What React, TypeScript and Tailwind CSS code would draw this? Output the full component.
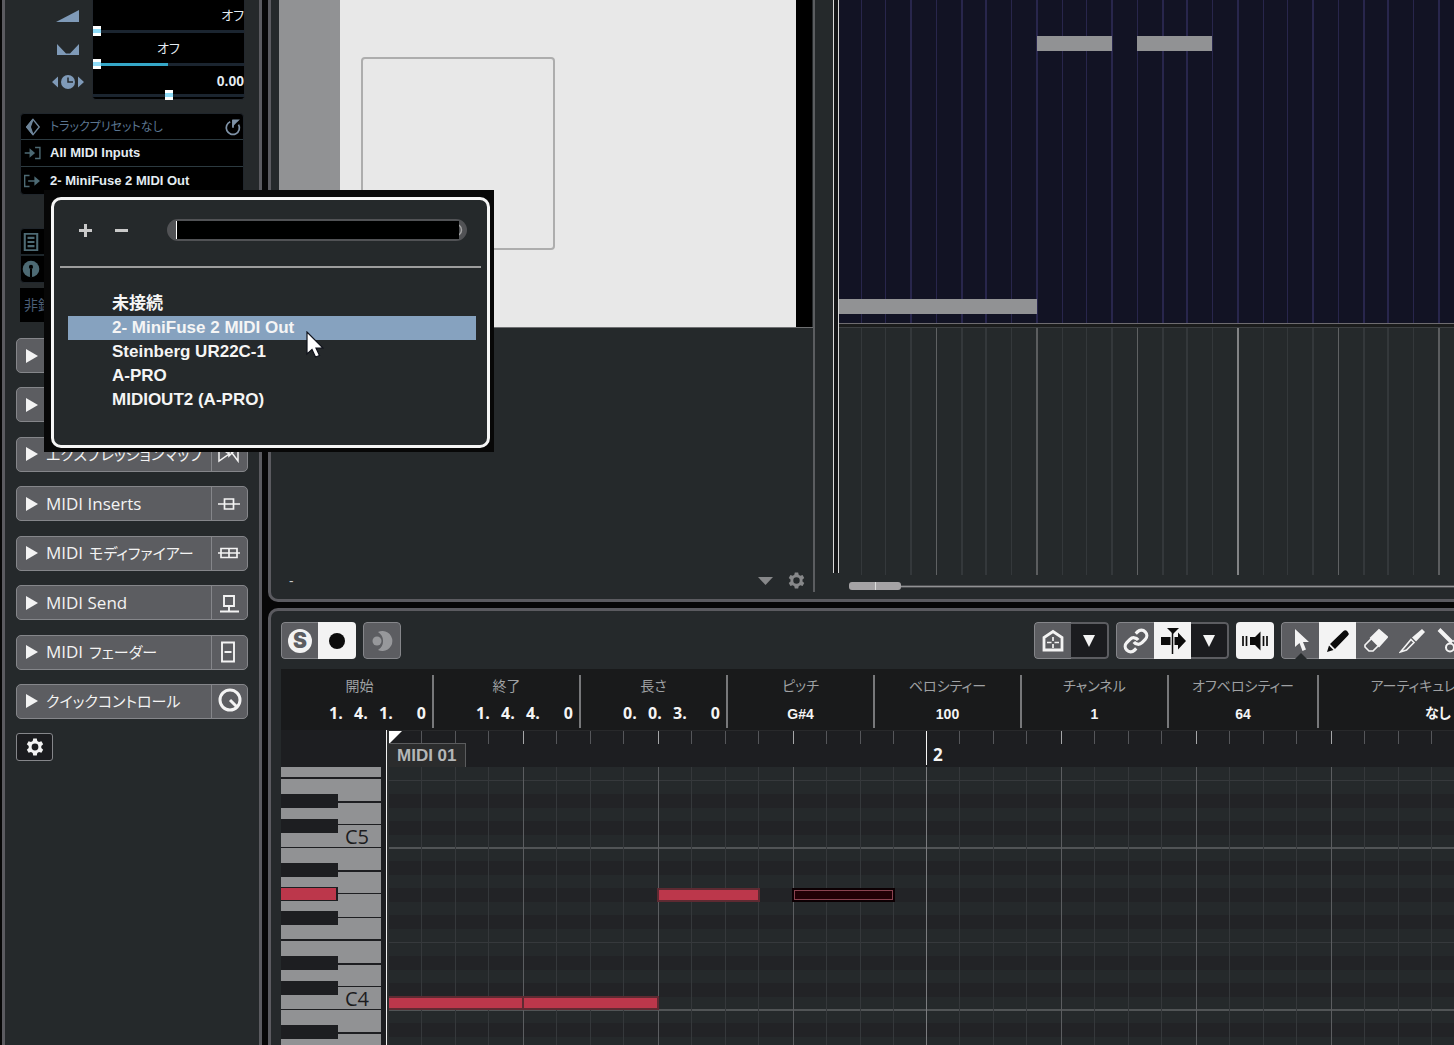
import type { CSSProperties, ReactNode } from "react";

const SUBS = [25, 49, 74, 100, 125, 149, 175, 200];
const WIDE = [74, 125, 149, 200];

const arrangeLines = Array.from({ length: 12 }, (_, bar) =>
  SUBS.map((s, i) => ({
    x: bar * 201 + s - 3,
    wide: WIDE.includes(s),
    level: i === 7 ? (bar % 2 === 1 ? 3 : 2) : i === 3 ? 1 : 0,
  }))
).flat();

const levelColor = ["bg-[#34383b]", "bg-[#5f6163]", "bg-[#5b5d5f]", "bg-[#828385]"];

// sixteenth positions inside the key editor, four bars are plenty
const ticks = Array.from({ length: 64 }, (_, i) => ({
  x: Math.floor(i / 16) * 538 + (Math.floor(i / 4) % 4) * 135 + [0, 33, 67, 100][i % 4] - 1,
  beat: i % 4 === 0,
  bar: i % 16 === 0,
})).slice(1);

// B down to C
const rows = [
  { h: "h-[13px]", black: false },
  { h: "h-[14px]", black: true },
  { h: "h-[13px]", black: false },
  { h: "h-[14px]", black: true },
  { h: "h-[13px]", black: false },
  { h: "h-[14px]", black: true },
  { h: "h-[13px]", black: false },
  { h: "h-[14px]", black: false },
  { h: "h-[14px]", black: true },
  { h: "h-[13px]", black: false },
  { h: "h-[14px]", black: true },
  { h: "h-[13px]", black: false },
];

const whiteKeys = [
  "h-6 border-b-2",
  "h-[22px] border-b",
  "h-6 border-b",
  "h-[23px] border-b-2",
  "h-6 border-b-2",
  "h-[22px] border-b",
  "h-[23px] border-b",
];

const blackKeys = [15, 39, 63, 108, 133];

function Octave({ name, active }: { name?: string; active?: boolean }) {
  return (
    <div className="relative shrink-0">
      {whiteKeys.map((k, i) => (
        <div
          key={i}
          className={`${k} flex items-center justify-end border-[#1d1e21] bg-[#919294] pt-px pr-3 text-xl text-[#1c1c1e]`}
        >
          {i === 6 && name}
        </div>
      ))}
      {blackKeys.map((top) => (
        <div
          key={top}
          style={{ top }}
          className={`absolute left-0 h-[14px] w-[57px] ${
            active && top === 39 ? "border-y border-r-2 border-[#1d1e21] bg-[#bc374b]" : "bg-[#1d1e21]"
          }`}
        />
      ))}
    </div>
  );
}

function OctaveRows() {
  return (
    <div className="relative shrink-0">
      {rows.map((r, i) => (
        <div
          key={i}
          className={`${r.h} ${r.black ? "bg-[#222326]" : "bg-[#25292b]"} ${
            i === 7 ? "border-t border-[#36393c]" : ""
          }`}
        />
      ))}
      <div className="absolute inset-x-0 -top-px h-[2px] bg-[#515456]" />
    </div>
  );
}

function Note({ style, selected }: { style: CSSProperties; selected?: boolean }) {
  return (
    <div
      style={style}
      className={`absolute h-[14px] border-2 ${selected ? "border-[#0c0003] bg-[#8a4350] p-px" : "border-[#5e2a32] bg-[#bc374b]"}`}
    >
      {selected && <div className="h-full bg-[#210005]" />}
    </div>
  );
}

function Icon({ children, size = 26, className = "" }: { children: ReactNode; size?: number; className?: string }) {
  return (
    <svg
      width={size}
      height={size}
      viewBox="0 0 26 26"
      fill="none"
      stroke="currentColor"
      strokeWidth="2"
      aria-hidden="true"
      className={`shrink-0 ${className}`}
    >
      {children}
    </svg>
  );
}

const gearPath =
  "M10.7 2h4.6l.7 3.2 2.2 1.3 3.1-1 2.3 4-2.4 2.2v2.6l2.4 2.2-2.3 4-3.1-1-2.2 1.3-.7 3.2h-4.6l-.7-3.2-2.2-1.3-3.1 1-2.3-4 2.4-2.2v-2.6L2.4 9.5l2.3-4 3.1 1 2.2-1.3zM13 8.6a4.4 4.4 0 1 0 0 8.800 4.400 4.400 0 0 0 0-8.800z";

function Gear({ size, className }: { size: number; className?: string }) {
  return (
    <Icon size={size} className={className}>
      <path d={gearPath} fill="currentColor" stroke="none" fillRule="evenodd" />
    </Icon>
  );
}

const rangeBase =
  "block h-[10px] w-full appearance-none bg-no-repeat [&::-webkit-slider-thumb]:h-[10px] [&::-webkit-slider-thumb]:w-2 [&::-webkit-slider-thumb]:appearance-none [&::-webkit-slider-thumb]:bg-[linear-gradient(#fff_3px,#8fdcf8_3px,#8fdcf8_7px,#fff_7px)]";
const rangeTrack = "bg-[linear-gradient(#1b2530,#1b2530)] bg-[length:100%_3px] bg-center";
const rangeHalf =
  "bg-[linear-gradient(90deg,#35a7c8_50%,#1b2530_50%)] bg-[length:100%_3px] bg-center";

const sections: { name: string; kana?: string; hidden?: boolean; icon: ReactNode }[] = [
  { name: "コード", hidden: true, icon: <path d="M3 13h20" /> },
  { name: "MIDI トラック", hidden: true, icon: <path d="M3 13h20" /> },
  {
    name: "",
    kana: "エクスプレッションマップ",
    icon: <path d="M3 6l10 7-10 7zM22 6v14l-9-12v7z" strokeWidth="1.500" />,
  },
  { name: "MIDI Inserts", icon: <path d="M2 13h6M18 13h6M8.500 8h9v10h-9zM8 13h10" strokeWidth="1.700" /> },
  {
    name: "MIDI",
    kana: "モディファイアー",
    icon: <path d="M2 13h22M5 8.500h16v9H5zM13 8.500v9" strokeWidth="1.700" />,
  },
  { name: "MIDI Send", icon: <path d="M8 6h10v10H8zM13 16v5M4 21.500h19" strokeWidth="1.900" /> },
  { name: "MIDI", kana: "フェーダー", icon: <path d="M6 3.500h12v19H6zM8.500 13h7" strokeWidth="1.900" /> },
  {
    name: "",
    kana: "クイックコントロール",
    icon: (
      <>
        <circle cx="14" cy="12" r="10" strokeWidth="3" />
        <path d="M14 12l7 7" strokeWidth="3" />
      </>
    ),
  },
];

function Sidebar() {
  return (
    <aside className="flex w-[260px] shrink-0 flex-col border-x-[3px] border-[#5b5b60] bg-[#25292b] px-[11px]">
      <div className="flex h-[100px] shrink-0 justify-end pr-[3px]">
        <div className="flex w-10 flex-col items-center pr-2 text-[#7f9ab8]">
          <svg width="24" height="12" viewBox="0 0 24 12" className="mt-[10px]" aria-hidden="true">
            <path d="M0 12L23 0v12z" fill="currentColor" />
          </svg>
          <svg width="22" height="11" viewBox="0 0 22 11" className="mt-[22px]" aria-hidden="true">
            <path d="M0 0l9 9.500h4L22 0v11H0z" fill="currentColor" />
          </svg>
          <svg width="32" height="14" viewBox="0 0 32 14" className="mt-5 shrink-0" aria-hidden="true">
            <path d="M6 1.500v11L0 7zM26 1.500v11L32 7z" fill="currentColor" />
            <circle cx="16" cy="7" r="7" fill="currentColor" />
            <path d="M16 2.500V7h5" fill="none" stroke="#25292b" strokeWidth="1.500" />
          </svg>
        </div>
        <div className="w-[153px] rounded-b border border-t-0 border-[#22272d] bg-black leading-none text-[#e4ecf2]">
          <label className="block h-[26px] pt-[9px] text-right text-[13px]" htmlFor="volume">
            オフ
          </label>
          <input id="volume" type="range" min="0" max="100" defaultValue="0" className={`${rangeBase} ${rangeTrack}`} />
          <label className="block h-[23px] pt-[6px] text-center text-[13px]" htmlFor="pan">
            オフ
          </label>
          <input id="pan" type="range" min="0" max="100" defaultValue="0" className={`${rangeBase} ${rangeHalf}`} />
          <label
            className="block h-[21px] pt-[5px] text-right font-[Liberation_Sans] text-sm leading-none font-bold"
            htmlFor="delay"
          >
            0.00
          </label>
          <input id="delay" type="range" min="0" max="100" defaultValue="50" className={`${rangeBase} ${rangeTrack}`} />
        </div>
      </div>

      <div className="mx-1 mt-[13px] shrink-0 divide-y divide-[#2c3a40] rounded border border-[#20262c] bg-black text-[13px]">
        <button className="flex h-[26px] w-full items-center gap-2 pr-px pl-[3px] text-left text-[#5b7590]">
          <Icon size={18} className="text-[#6d8499]">
            <path d="M13 2l9 11-9 11L4 13z" />
            <path d="M13 2L4 13l9 11-4-11z" fill="currentColor" />
          </Icon>
          <span className="flex-1 text-xs whitespace-nowrap">トラックプリセットなし</span>
          <Icon size={18} className="text-[#7f93a8]">
            <path d="M9 5.500a9.500 9.500 0 1 0 12 4" strokeWidth="2.500" />
            <path d="M12 13V2h11l-5 5z" fill="currentColor" stroke="none" />
            <path d="M13 14V3" strokeWidth="2.500" />
          </Icon>
        </button>
        <button className="flex h-[27px] w-full items-center gap-2 pl-[3px] text-left font-[Liberation_Sans] font-bold text-[#e4ecf2]">
          <Icon size={18} className="text-[#4d6a74]">
            <path d="M1 13h8M16 5h7v16h-7" />
            <path d="M8 6l8 7-8 7z" fill="currentColor" stroke="none" />
          </Icon>
          All MIDI Inputs
        </button>
        <button className="flex h-[27px] w-full items-center gap-2 pl-[3px] text-left font-[Liberation_Sans] font-bold text-[#e4ecf2]">
          <Icon size={18} className="text-[#4d6a74]">
            <path d="M8 5H1v16h7M6 13h11" />
            <path d="M15 6l8 7-8 7z" fill="currentColor" stroke="none" />
          </Icon>
          2- MiniFuse 2 MIDI Out
        </button>
      </div>

      <div className="mx-1 mt-[33px] shrink-0 divide-y-2 divide-[#1d262b] rounded border border-[#20262c] bg-black text-[#4d6a74]">
        <div className="flex h-[27px] items-center pl-px">
          <Icon size={18}>
            <path d="M4 1h18v24H4zM8 7h10M8 13h10M8 19h10" strokeWidth="3" />
          </Icon>
        </div>
        <div className="flex h-[26px] items-center pl-px">
          <Icon size={18}>
            <circle cx="13" cy="13" r="12" fill="currentColor" stroke="none" />
            <path d="M13 13v12" stroke="#000" strokeWidth="3" />
            <circle cx="13" cy="10" r="3" fill="#000" stroke="none" />
          </Icon>
        </div>
      </div>

      <div className="mx-1 mt-[5px] flex h-[34px] shrink-0 items-center bg-black pl-1 text-sm text-[#4b5f78]">
        非録音
      </div>

      <div className="mt-4 flex h-[381px] shrink-0 flex-col justify-between">
        {sections.map((s, i) => (
          <button
            key={i}
            aria-label={`${s.name} ${s.kana ?? ""}`.trim()}
            className="flex h-[35px] items-stretch overflow-hidden rounded-[5px] border border-[#85868a] bg-[#5c5d61] text-left text-[17px] whitespace-nowrap text-[#f3f3f3]"
          >
            <span className="flex min-w-0 flex-1 items-center pl-[9px]">
              <svg width="12" height="14" viewBox="0 0 12 14" className="mr-2 shrink-0" aria-hidden="true">
                <path d="M0 0l12 7-12 7z" fill="currentColor" />
              </svg>
              {!s.hidden && s.name}
              {s.kana && <span className={s.name ? "ml-[6px] text-[15px]" : "text-[15px]"}>{s.kana}</span>}
            </span>
            <span className="flex w-9 shrink-0 items-center border-l border-[#85868a] pl-1">
              <Icon size={26}>{s.icon}</Icon>
            </span>
          </button>
        ))}
      </div>

      <button
        aria-label="設定"
        className="mt-[14px] flex h-[28px] w-[37px] shrink-0 items-center justify-center rounded-[3px] border border-[#85868a] bg-[#1b1c1f] text-[#f3f3f3]"
      >
        <Gear size={20} />
      </button>
    </aside>
  );
}

function ArrangeView() {
  return (
    <section className="flex h-[602px] shrink-0 overflow-hidden rounded-bl-[10px] border-b-[3px] border-l-[3px] border-[#5b5b60] bg-[#25292b]">
      <div className="flex w-[542px] shrink-0 flex-col pl-2">
        <div className="flex h-[328px] border-b border-[#6e6f71]">
          <div className="w-[61px] bg-[#919294]" />
          <div className="flex-1 bg-[#e8e8e8] pt-[57px] pl-[21px]">
            <div className="h-[193px] w-[194px] rounded-[4px] border-2 border-[#adadad]" />
          </div>
          <div className="w-[17px] border-r border-[#25292b] bg-black" />
        </div>
        <div className="mt-auto flex h-[37px] items-center pr-[7px] pl-[10px] text-sm text-[#c8c9ca]">
          <span className="flex-1">-</span>
          <svg width="15" height="8" viewBox="0 0 15 8" className="mr-[14px] text-[#87888a]" aria-hidden="true">
            <path d="M0 0h15L7.500 8z" fill="currentColor" />
          </svg>
          <Gear size={19} className="text-[#87888a]" />
        </div>
      </div>
      <div className="h-[592px] w-[2px] shrink-0 bg-[#5b5d60]" />
      <div className="ml-[18px] h-[573px] w-[6px] shrink-0 border-x border-[#d8d8d8] bg-[#151618]" />
      <div className="flex min-w-0 flex-1 flex-col">
        <div className="relative h-[324px] overflow-hidden border-b border-[#6e6c70] bg-[#121324]">
          {arrangeLines.map((l) => (
            <div
              key={l.x}
              style={{ left: l.x }}
              className={`absolute inset-y-0 bg-[#28264c] ${l.wide ? "w-[2px]" : "w-px"}`}
            />
          ))}
          <div className="absolute top-[299px] left-0 h-[15px] w-[198px] bg-[#919294]" />
          <div className="absolute top-[36px] left-[198px] h-[15px] w-[75px] bg-[#919294]" />
          <div className="absolute top-[36px] left-[298px] h-[15px] w-[75px] bg-[#919294]" />
        </div>
        <div className="h-1 border-b border-[#3d4042] bg-[#1b1c1c]" />
        <div className="relative h-[247px] overflow-hidden">
          {arrangeLines.map((l) => (
            <div
              key={l.x}
              style={{ left: l.x }}
              className={`absolute inset-y-0 ${levelColor[l.level]} ${l.wide ? "w-[2px]" : "w-px"}`}
            />
          ))}
        </div>
        <div className="mt-[7px] ml-[10px] flex h-2 items-center">
          <div className="flex h-2 w-[52px] justify-center rounded-[3px] bg-[#a5a3a5]">
            <div className="w-px bg-[#dcdcdc]" />
          </div>
          <div className="h-[3px] flex-1 border-y border-[#4c4d50] bg-[#919294]" />
        </div>
      </div>
    </section>
  );
}

const segment = "flex shrink-0 items-center justify-center";
const group = "flex h-[37px] shrink-0 overflow-hidden rounded-[4px] text-[#f3f3f3]";

function Down() {
  return (
    <svg width="12" height="12" viewBox="0 0 12 12" aria-hidden="true">
      <path d="M0 0h12L6 12z" fill="currentColor" />
    </svg>
  );
}

const grey = "border border-[#85868a] bg-[#5c5d61]";
const dark = "border-y-2 border-r-2 border-[#5c5d61] bg-[#1b1c1f]";
const lit = "bg-[#f3f3f3] text-[#0c0c0c]";
const greyMid = "border-y border-[#85868a] bg-[#5c5d61]";

function Toolbar() {
  return (
    <div className="flex h-[58px] shrink-0 items-start overflow-hidden pt-[11px] pl-[10px]">
      <div className={group}>
        <button aria-label="ソロ" className={`${segment} ${grey} w-[37px] rounded-l-[4px] border-r-0`}>
          <span className="flex size-6 items-center justify-center rounded-full bg-[#f3f3f3] font-[Inter] text-[21px] leading-none font-black text-[#5c5d61]">
            S
          </span>
        </button>
        <button aria-label="録音" className={`${segment} ${lit} w-[38px]`}>
          <span className="size-4 rounded-full bg-[#0c0c0c]" />
        </button>
      </div>
      <div className={`${group} ml-[7px]`}>
        <button aria-label="音響フィードバック" className={`${segment} ${grey} w-[38px] rounded-[4px]`}>
          <Icon className="text-[#97989b]">
            <circle cx="8" cy="13" r="4.500" fill="currentColor" stroke="none" />
            <path d="M9 4a10 10 0 1 1 0 18a10.500 10.500 0 0 0 0-18z" fill="currentColor" stroke="none" />
          </Icon>
        </button>
      </div>

      <div className="ml-auto flex w-[420px] shrink-0 gap-[7px] overflow-hidden">
        <div className={group}>
          <button aria-label="ホーム" className={`${segment} ${grey} w-[37px] rounded-l-[4px] border-r-0`}>
            <Icon>
              <path d="M4 22V9.500L13 3.500l9 6V22z" strokeWidth="2.800" />
              <path d="M13 9v4M13 16v4M7 14.500h4.500M14.500 14.500h4.500" strokeWidth="1.700" />
            </Icon>
          </button>
          <button aria-label="メニュー" className={`${segment} ${dark} w-[38px] rounded-r-[4px]`}>
            <Down />
          </button>
        </div>
        <div className={group}>
          <button aria-label="リンク" className={`${segment} ${grey} w-[38px] rounded-l-[4px] border-r-0`}>
            <svg width="26" height="26" viewBox="0 0 24 24" fill="none" stroke="currentColor" strokeWidth="3" aria-hidden="true">
              <path d="M10 13a5 5 0 0 0 7.540.54l3-3a5 5 0 0 0-7.070-7.070l-1.720 1.710" />
              <path d="M14 11a5 5 0 0 0-7.540-.54l-3 3a5 5 0 0 0 7.070 7.070l1.710-1.710" />
            </svg>
          </button>
          <button aria-label="オートスクロール" className={`${segment} ${lit} w-[37px]`}>
            <Icon>
              <path d="M1 9h9.500v8H1zM14.500 9H18V4.500l8 8.500-8 8.500V17h-3.500z" fill="currentColor" stroke="none" />
              <path d="M7 0h12l-6 6z" fill="currentColor" stroke="none" />
              <path d="M12.500 2v24" strokeWidth="1.500" />
            </Icon>
          </button>
          <button aria-label="メニュー" className={`${segment} ${dark} w-[38px] rounded-r-[4px]`}>
            <Down />
          </button>
        </div>
        <div className={group}>
          <button aria-label="試聴" className={`${segment} ${lit} w-[38px]`}>
            <Icon>
              <path d="M8 9h5l5.500-5.500v19L13 17H8z" fill="currentColor" stroke="none" />
              <path d="M1 8v10M4.500 8v10M21.500 8v10M25 8v10" strokeWidth="1.700" />
            </Icon>
          </button>
        </div>
        <div className={group}>
          <button aria-label="選択" className={`${segment} ${grey} relative w-[38px] rounded-l-[4px] border-r-0`}>
            <Icon>
              <path d="M7 1v18l4.500-4 3 8 3.500-1.500-3-7.500h6z" fill="currentColor" stroke="none" />
            </Icon>
            <svg width="12" height="6" viewBox="0 0 12 6" className="absolute -bottom-px left-[13px]" aria-hidden="true">
              <path d="M0 6l6-6 6 6z" fill="#25292b" />
            </svg>
          </button>
          <button aria-label="鉛筆" className={`${segment} ${lit} w-[37px]`}>
            <Icon>
              <path
                d="M2 24l2-6.500 4.500 4.500zM5 16L18.500 3q2-1.500 4 .5t.5 4L10 21z"
                fill="currentColor"
                stroke="none"
              />
            </Icon>
          </button>
          <button aria-label="消しゴム" className={`${segment} ${greyMid} w-[37px]`}>
            <Icon>
              <path d="M3 17l7-7 7 7-6 6H7l-4-4z" strokeWidth="1.700" />
              <path d="M9 10l8-8 8 7-8 9z" fill="currentColor" />
            </Icon>
          </button>
          <button aria-label="ナイフ" className={`${segment} ${greyMid} w-[37px]`}>
            <Icon>
              <path d="M13 9.500L23 1l3 3-9 9.500z" fill="currentColor" stroke="none" />
              <path d="M12 11.500l3 3-7.500 7.500-6 2z" strokeWidth="1.600" />
            </Icon>
          </button>
          <button aria-label="はさみ" className={`${segment} ${greyMid} w-[37px]`}>
            <Icon>
              <path d="M3 1.500l13 13M31 1.500l-13 13" strokeWidth="4" />
              <circle cx="14" cy="19.500" r="4" />
              <circle cx="22" cy="19.500" r="4" />
            </Icon>
          </button>
        </div>
      </div>
    </div>
  );
}

const info = [
  { label: "開始", parts: ["1.", "4.", "1.", "0"] },
  { label: "終了", parts: ["1.", "4.", "4.", "0"] },
  { label: "長さ", parts: ["0.", "0.", "3.", "0"] },
  { label: "ピッチ", value: "G#4" },
  { label: "ベロシティー", value: "100" },
  { label: "チャンネル", value: "1" },
  { label: "オフベロシティー", value: "64", wide: true },
];

function InfoLine() {
  return (
    <dl className="ml-[10px] flex h-[61px] shrink-0 overflow-hidden bg-[#191a1b] pt-[6px] pb-[2px] pl-[6px] text-[#9fa1a3]">
      {info.map((c) => (
        <div
          key={c.label}
          className={`flex shrink-0 flex-col items-center border-r-2 border-[#77787a] ${c.wide ? "w-[150px]" : "w-[147px]"}`}
        >
          <dt className="h-[26px] text-sm leading-[22px] whitespace-nowrap">{c.label}</dt>
          {c.parts ? (
            <dd className="flex w-full justify-end pr-[6px] text-base leading-6 font-bold text-[#f5f5f5]">
              {c.parts.map((p, i) => (
                <span key={i} className={i === 3 ? "w-[22px] text-right" : "w-[25px]"}>
                  {p}
                </span>
              ))}
            </dd>
          ) : (
            <dd className="pt-px font-[Liberation_Sans] text-sm leading-6 font-bold text-[#f5f5f5]">{c.value}</dd>
          )}
        </div>
      ))}
      <div className="flex w-[238px] shrink-0 flex-col items-center">
        <dt className="h-[26px] text-sm leading-[22px] whitespace-nowrap">アーティキュレーション</dt>
        <dd className="text-sm leading-6 font-bold text-[#f5f5f5]">なし</dd>
      </div>
    </dl>
  );
}

function KeyEditor() {
  return (
    <section className="flex min-h-[437px] flex-1 flex-col overflow-hidden rounded-tl-[10px] border-t-[3px] border-l-[3px] border-[#5b5b60] bg-[#25292b]">
      <Toolbar />
      <InfoLine />
      <div className="ml-[10px] flex min-h-0 flex-1">
        <div className="flex w-[105px] shrink-0 flex-col bg-[#1d1e21]">
          <div className="h-[37px] shrink-0" />
          <div className="h-0 w-[100px] flex-1 overflow-hidden">
            <div className="-mt-[81px]">
              <Octave name="C5" />
              <Octave name="C4" active />
              <Octave />
            </div>
          </div>
        </div>
        <div className="w-px shrink-0 bg-[#f0f0f0]" />
        <div className="w-[2px] shrink-0 bg-[#2b2d2e]" />
        <div className="flex min-w-0 flex-1 flex-col">
          <div className="relative h-[37px] shrink-0 overflow-hidden border-t border-[#28292b] bg-[#1d1e21]">
            {ticks.map((t) => (
              <div
                key={t.x}
                style={{ left: t.x }}
                className={`absolute top-0 w-px ${
                  t.bar ? "h-[34px] bg-[#f5f5f5]" : t.beat ? "h-[13px] bg-[#a5a6a8]" : "h-[13px] bg-[#55565a]"
                }`}
              />
            ))}
            <svg width="13" height="13" viewBox="0 0 13 13" className="absolute top-0 left-0" aria-hidden="true">
              <path d="M0 0h13L0 13z" fill="#fff" />
            </svg>
            <span className="absolute top-3 left-0 flex h-6 w-[77px] items-center border-t border-r border-[#5b5c5e] bg-[#2b2c2d] pl-2 font-[Liberation_Sans] text-[17px] font-bold whitespace-nowrap text-[#b4b6b7]">
              MIDI 01
            </span>
            <span className="absolute top-3 left-[544px] text-[17px] leading-6 font-bold text-[#f5f5f5]">2</span>
          </div>
          <div className="relative h-0 flex-1 overflow-hidden">
            <div className="-mt-[81px]">
              <OctaveRows />
              <OctaveRows />
              <OctaveRows />
            </div>
            {ticks.map((t) => (
              <div
                key={t.x}
                style={{ left: t.x }}
                className={`absolute inset-y-0 w-px ${t.bar ? "bg-[#7b7c7f]" : t.beat ? "bg-[#5b5d60]" : "bg-[#35383b]"}`}
              />
            ))}
            <Note style={{ left: -2, top: 229, width: 137 }} />
            <Note style={{ left: 133, top: 229, width: 137 }} />
            <Note style={{ left: 268, top: 121, width: 103 }} />
            <Note style={{ left: 403, top: 121, width: 103 }} selected />
          </div>
        </div>
      </div>
    </section>
  );
}

const outputs = ["未接続", "2- MiniFuse 2 MIDI Out", "Steinberg UR22C-1", "A-PRO", "MIDIOUT2 (A-PRO)"];

function OutputMenu() {
  return (
    <div className="absolute top-[190px] left-[44px] w-[450px] bg-[#070707] pt-[7px] pr-1 pb-1 pl-[7px]">
      <div className="rounded-[10px] border-[3px] border-[#f5f5f5] bg-[#25292b] px-[6px] pb-[33px]">
        <div className="flex h-[68px] items-center border-b-2 border-[#9d9d9d] pb-[6px] pl-[19px] text-[#c9c9c9]">
          <button aria-label="展開" className="mr-[23px]">
            <svg width="13" height="13" viewBox="0 0 13 13" className="block" aria-hidden="true">
              <path d="M6.500 0v13M0 6.500h13" stroke="currentColor" strokeWidth="3" />
            </svg>
          </button>
          <button aria-label="折りたたむ" className="mr-[39px]">
            <svg width="13" height="13" viewBox="0 0 13 13" className="block" aria-hidden="true">
              <path d="M0 6.500h13" stroke="currentColor" strokeWidth="3" />
            </svg>
          </button>
          <div className="flex h-[22px] w-[300px] items-center rounded-full bg-[#515255] pr-1 pl-[9px]">
            <input
              aria-label="検索"
              className="h-[18px] min-w-0 flex-1 border-l border-white bg-black text-sm text-white outline-none"
            />
            <svg width="4" height="12" viewBox="0 0 4 12" className="shrink-0" aria-hidden="true">
              <path d="M0 1q2.500 2 2.500 5T0 11" fill="none" stroke="#a5a5a5" strokeWidth="1.500" />
            </svg>
          </div>
        </div>
        <ul className="mt-6 pr-[5px] pl-2 font-[Liberation_Sans,Noto_Sans_CJK_JP] text-[17px] leading-6 font-bold text-[#f5f5f5]">
          {outputs.map((o, i) => (
            <li key={o}>
              <button
                className={`block h-6 w-full pl-[44px] text-left whitespace-nowrap ${i === 1 ? "bg-[#86a2bf]" : ""}`}
              >
                {o}
              </button>
            </li>
          ))}
        </ul>
      </div>
      <svg width="18" height="28" viewBox="0 0 18 28" className="absolute top-[141px] left-[262px]" aria-hidden="true">
        <path
          d="M1 1v22l5-4.500 3.500 7.500 4-1.500-3.500-7.500h7z"
          fill="#fff"
          stroke="#10131c"
          strokeWidth="1.200"
        />
      </svg>
    </div>
  );
}

export default function App() {
  return (
    <div className="relative flex h-screen gap-[6px] overflow-hidden bg-[#070707] pl-[2px] font-[Open_Sans,Noto_Sans_CJK_JP,sans-serif] [font-feature-settings:'palt']">
      <Sidebar />
      <main className="flex min-w-0 flex-1 flex-col gap-[6px]">
        <ArrangeView />
        <KeyEditor />
      </main>
      <OutputMenu />
    </div>
  );
}
